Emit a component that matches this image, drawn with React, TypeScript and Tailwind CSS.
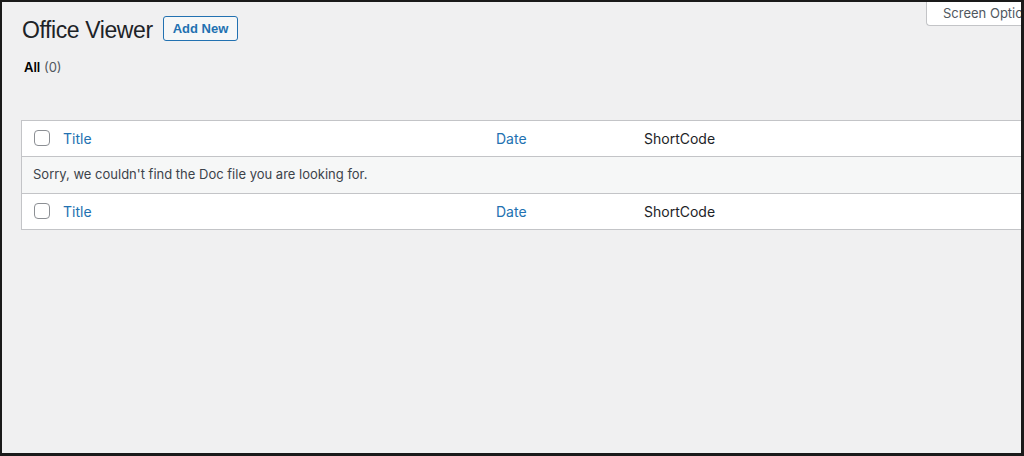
import React from "react";

function Checkbox() {
  return <span className="block h-4 w-4 shrink-0 rounded-[4px] border border-[#8c8f94] bg-white" />;
}

function HeadRow({ top }: { top?: boolean }) {
  return (
    <div
      className={`flex h-9 items-center bg-white pl-3 text-[14px] ${
        top ? "border-b border-[#c3c4c7]" : "border-t border-[#c3c4c7]"
      }`}
    >
      <Checkbox />
      <span className="ml-[13px] w-[433px] text-[#2271b1]">Title</span>
      <span className="w-[148px] text-[#2271b1]">Date</span>
      <span className="text-[#1d2327]">ShortCode</span>
    </div>
  );
}

export default function App() {
  return (
    <div className="h-[456px] w-[1024px] overflow-hidden border-b-[3px] border-l-2 border-r-[3px] border-t-2 border-[#1a1a1a] bg-[#f0f0f1] font-['Inter',sans-serif]">
      <div className="relative h-full pl-[19px]">
        <div className="absolute right-0 top-0 flex h-6 w-[95px] items-center rounded-bl-[4px] border-b border-l border-[#c3c4c7] bg-white pl-4 text-[13px] whitespace-nowrap text-[#50575e]">
          Screen Options
        </div>
        <div className="flex items-start gap-[10px] pt-[14px] font-['Liberation_Sans',Arial,sans-serif]">
          <h1 className="pl-[1px] text-[23px] leading-[28px] tracking-[-0.4px] text-[#1d2327]">Office Viewer</h1>
          <button className="flex h-[25px] items-center rounded-[3px] border border-[#2271b1] bg-[#f6f7f7] px-[9px] text-[13px] font-bold text-[#2271b1]">
            Add New
          </button>
        </div>
        <div className="mt-[14px] pl-[3px] text-[13px] text-[#50575e]">
          <span className="font-semibold text-[#000]">All</span> (0)
        </div>
        <div className="mt-[42px] w-[1040px] border border-[#c3c4c7] bg-white">
          <HeadRow top />
          <div className="flex h-9 items-center bg-[#f6f7f7] pl-[11px] text-[13px] text-[#3c434a]">
            Sorry, we couldn't find the Doc file you are looking for.
          </div>
          <HeadRow />
        </div>
      </div>
    </div>
  );
}
